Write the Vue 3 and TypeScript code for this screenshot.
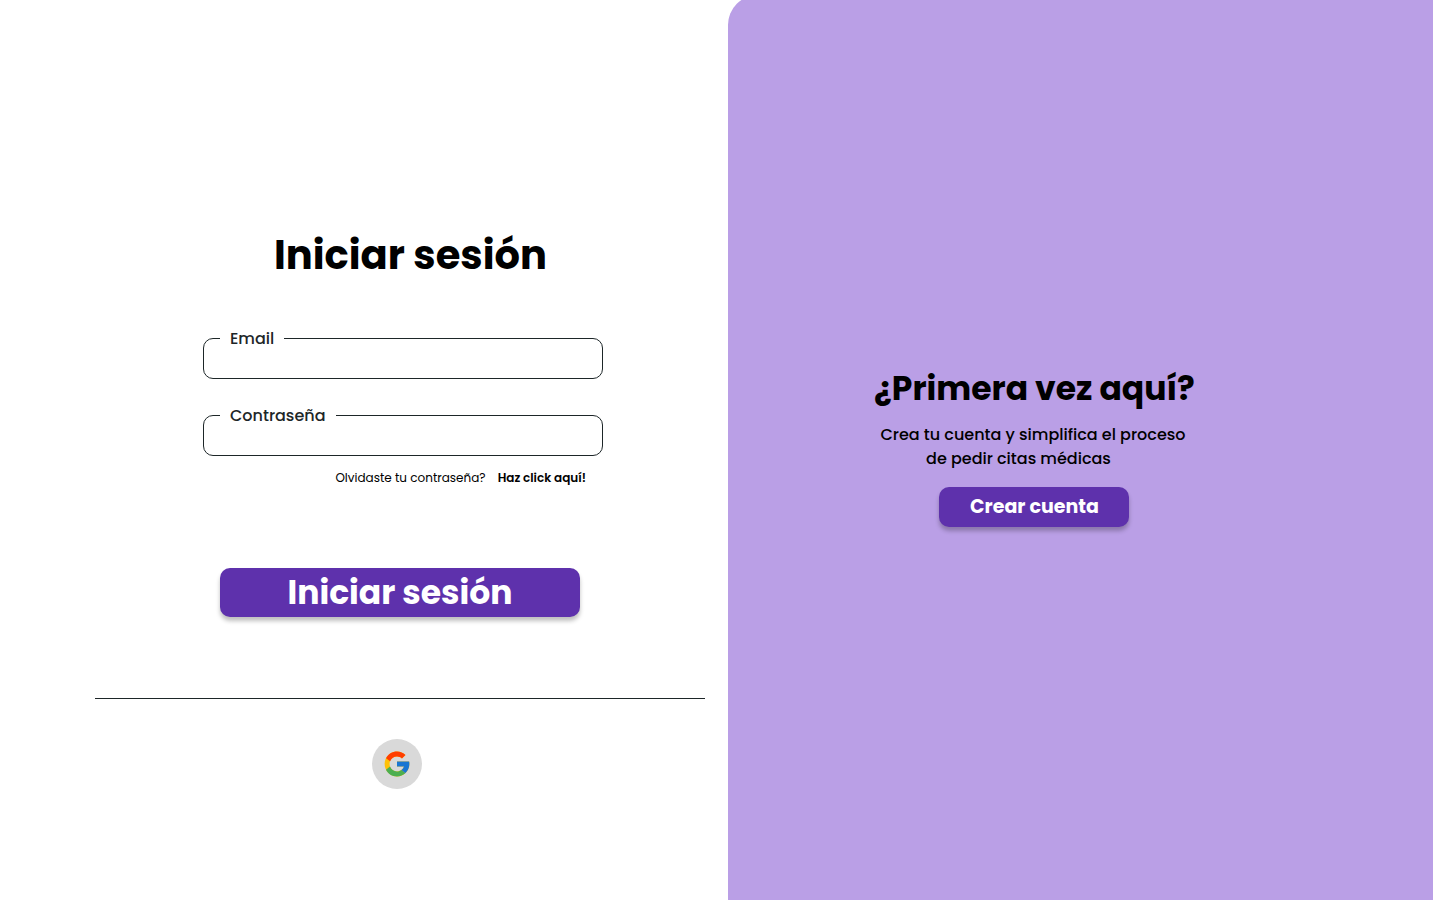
<script setup lang="ts">
import { ref } from 'vue'

interface Field {
  id: string
  label: string
  type: string
  autocomplete: string
}

const fields: Field[] = [
  { id: 'email', label: 'Email', type: 'email', autocomplete: 'email' },
  { id: 'password', label: 'Contraseña', type: 'password', autocomplete: 'current-password' },
]

const values = ref<Record<string, string>>({ email: '', password: '' })
</script>

<template>
  <main class="page">
    <section class="login">
      <h1 class="login-title">Iniciar sesión</h1>
      <form class="login-form" @submit.prevent>
        <div class="fields">
          <fieldset v-for="field in fields" :key="field.id" class="field">
            <legend class="field-legend">
              <label :for="field.id">{{ field.label }}</label>
            </legend>
            <input
              :id="field.id"
              v-model="values[field.id]"
              class="field-input"
              :type="field.type"
              :autocomplete="field.autocomplete"
            />
          </fieldset>
          <p class="recover">
            <span>Olvidaste tu contraseña?</span>
            <a class="recover-link" href="#recuperar">Haz click aquí!</a>
          </p>
        </div>
        <button class="button button-login" type="submit">Iniciar sesión</button>
      </form>
      <hr class="divider" />
      <div class="social">
        <button class="google" type="button" aria-label="Google">
          <svg class="google-icon" viewBox="3 3 42 42" aria-hidden="true">
            <path fill="#FFC107" d="M43.6 20.1H42V20H24v8h11.3C33.7 32.7 29.2 36 24 36c-6.600 0-12-5.400-12-12s5.400-12 12-12c3.100 0 5.800 1.200 8 3l5.700-5.700C34 6.100 29.300 4 24 4 13 4 4 13 4 24s9 20 20 20 20-9 20-20c0-1.300-.1-2.600-.4-3.900z" />
            <path fill="#FF3D00" d="M6.300 14.700l6.600 4.800C14.700 15.100 19 12 24 12c3.100 0 5.800 1.200 8 3l5.700-5.700C34 6.100 29.300 4 24 4 16.300 4 9.700 8.300 6.300 14.700z" />
            <path fill="#4CAF50" d="M24 44c5.200 0 9.900-2 13.400-5.200l-6.200-5.200C29.200 35.100 26.700 36 24 36c-5.200 0-9.600-3.300-11.300-7.900l-6.500 5C9.500 39.600 16.200 44 24 44z" />
            <path fill="#1976D2" d="M43.600 20.100H42V20H24v8h11.300c-.8 2.200-2.200 4.200-4.100 5.600l6.200 5.200C37 39.200 44 34 44 24c0-1.300-.1-2.600-.4-3.900z" />
          </svg>
        </button>
      </div>
    </section>

    <aside class="signup">
      <h2 class="signup-title">¿Primera vez aquí?</h2>
      <p class="signup-text">
        <span class="signup-line">Crea tu cuenta y simplifica el proceso</span>
        <span class="signup-line signup-line-last">de pedir citas médicas</span>
      </p>
      <button class="button button-signup" type="button">Crear cuenta</button>
    </aside>
  </main>
</template>

<style>
body {
  margin: 0;
}
</style>

<style scoped>
.page {
  display: grid;
  grid-template-columns: 508fr 492fr;
  min-height: 100vh;
  overflow: hidden;
  background: #fff;
  color: #000;
  font-family: Poppins, Inter, "Open Sans", sans-serif;
}

.page * {
  box-sizing: border-box;
}

.login {
  display: flex;
  flex-direction: column;
  align-items: center;
  padding: 225px 0 40px 72px;
}

.login-title {
  margin: 0;
  padding-left: 21px;
  font-size: 40px;
  font-weight: 700;
  line-height: 60px;
}

.login-form {
  display: flex;
  flex-direction: column;
  align-items: center;
  width: 100%;
  margin-top: 41px;
}

.fields {
  display: flex;
  flex-direction: column;
  gap: 24px;
  width: 406px;
  max-width: 100%;
  padding-left: 6px;
}

.field {
  min-width: 0;
  margin: 0;
  padding: 0 16px;
  border: 1px solid #1d2628;
  border-radius: 10px;
}

.field-legend {
  padding: 0 10px;
  color: #1d2628;
  font-size: 16px;
  font-weight: 500;
  line-height: 25px;
}

.field-input {
  display: block;
  width: 100%;
  height: 27px;
  padding: 0 10px;
  border: 0;
  outline: 0;
  background: transparent;
  font: inherit;
}

.recover {
  display: flex;
  justify-content: flex-end;
  gap: 12px;
  margin: -10px 0 0;
  padding-right: 17px;
  font-size: 12px;
  line-height: 16px;
}

.recover-link {
  color: #000;
  font-weight: 600;
  text-decoration: none;
}

.button {
  border: 0;
  border-radius: 10px;
  background: #5e31ac;
  box-shadow: 0 4px 4px rgba(0, 0, 0, 0.25);
  color: #fff;
  font-family: inherit;
  font-weight: 700;
  cursor: pointer;
}

.button-login {
  width: 360px;
  max-width: 100%;
  height: 49px;
  margin-top: 82px;
  padding: 0;
  font-size: 33px;
  line-height: 48px;
}

.divider {
  width: 93%;
  height: 1px;
  margin: 81px 0 0;
  border: 0;
  background: #1d2628;
}

.social {
  margin-top: 40px;
  padding-right: 6px;
}

.google {
  display: grid;
  place-items: center;
  width: 50px;
  height: 50px;
  padding: 0;
  border: 0;
  border-radius: 50%;
  background: #d9d9d9;
  cursor: pointer;
}

.google-icon {
  width: 26px;
  height: 26px;
}

.signup {
  display: flex;
  flex-direction: column;
  align-items: center;
  margin-top: -5px;
  padding: 369px 92px 40px 0;
  border-top-left-radius: 30px;
  background: #ba9fe6;
}

.signup-title {
  margin: 0;
  font-size: 33px;
  font-weight: 700;
  line-height: 50px;
}

.signup-text {
  display: flex;
  flex-direction: column;
  align-items: center;
  margin: 9px 0 0;
  padding-right: 3px;
  font-size: 16px;
  font-weight: 500;
  line-height: 24px;
}

.signup-line-last {
  padding-right: 29px;
}

.button-signup {
  width: 190px;
  height: 40px;
  margin-top: 16px;
  padding: 0;
  font-size: 19px;
  line-height: 40px;
}
</style>
